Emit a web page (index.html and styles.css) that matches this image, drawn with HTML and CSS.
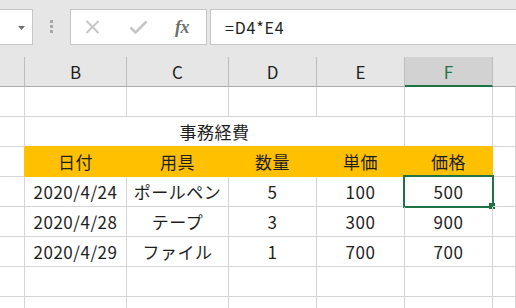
FILE: index.html
```html
<!DOCTYPE html>
<html lang="ja">
<head>
<meta charset="utf-8">
<link rel="stylesheet" href="styles.css">
</head>
<body>
<div class="toolbar">
  <div class="namebox">
    <svg class="caret" width="7" height="4" viewBox="0 0 7 4"><path d="M0 0H7L3.5 4Z" fill="#707070"/></svg>
  </div>
  <div class="grip"><i></i><i></i><i></i></div>
  <div class="fbuttons">
    <svg class="ico-x" width="15" height="14" viewBox="0 0 15 14"><path d="M1.5 1L13.5 13M13.5 1L1.5 13" stroke="#c6c6c6" stroke-width="2" fill="none"/></svg>
    <svg class="ico-check" width="19" height="14" viewBox="0 0 19 14"><path d="M1.5 7.5L6.5 12.5L17.5 1.5" stroke="#c6c6c6" stroke-width="2.6" fill="none"/></svg>
    <span class="fx">fx</span>
  </div>
  <div class="finput">=D4*E4</div>
</div>
<div class="grid">
  <div class="c h"></div>
  <div class="c h">B</div>
  <div class="c h">C</div>
  <div class="c h">D</div>
  <div class="c h">E</div>
  <div class="c h sel">F</div>
  <div class="c h last"></div>

  <div class="c"></div><div class="c"></div><div class="c"></div><div class="c"></div><div class="c"></div><div class="c"></div><div class="c"></div>

  <div class="c"></div>
  <div class="c title above-fill">事務経費</div>
  <div class="c above-fill"></div>
  <div class="c"></div>

  <div class="c before-fill"></div>
  <div class="c fill">日付</div>
  <div class="c fill">用具</div>
  <div class="c fill">数量</div>
  <div class="c fill">単価</div>
  <div class="c fill">価格</div>
  <div class="c"></div>

  <div class="c"></div>
  <div class="c">2020/4/24</div>
  <div class="c">ポールペン</div>
  <div class="c">5</div>
  <div class="c">100</div>
  <div class="c active">500<span class="selbox"><span class="handle"></span></span></div>
  <div class="c"></div>

  <div class="c"></div>
  <div class="c">2020/4/28</div>
  <div class="c">テープ</div>
  <div class="c">3</div>
  <div class="c">300</div>
  <div class="c">900</div>
  <div class="c"></div>

  <div class="c"></div>
  <div class="c">2020/4/29</div>
  <div class="c">ファイル</div>
  <div class="c">1</div>
  <div class="c">700</div>
  <div class="c">700</div>
  <div class="c"></div>

  <div class="c"></div><div class="c"></div><div class="c"></div><div class="c"></div><div class="c"></div><div class="c"></div><div class="c"></div>
  <div class="c"></div><div class="c"></div><div class="c"></div><div class="c"></div><div class="c"></div><div class="c"></div><div class="c"></div>
</div>
</body>
</html>
```
FILE: styles.css
```css
* { box-sizing: border-box; }

body {
  margin: 0;
  width: 516px;
  height: 308px;
  overflow: hidden;
  background: #e6e6e6;
  font-family: "Noto Sans CJK JP", "Noto Sans", sans-serif;
  color: #1e1e1e;
}

.toolbar {
  height: 57px;
  display: flex;
  align-items: flex-start;
  padding-top: 9px;
}

.namebox {
  width: 33px;
  height: 36px;
  background: #fff;
  border: 1px solid #c6c6c6;
  border-left: none;
  display: flex;
  align-items: center;
  justify-content: flex-end;
  padding-right: 7px;
}

.caret { display: block; margin-top: 1px; }

.grip {
  margin-left: 17px;
  margin-top: 11px;
  width: 3px;
  display: flex;
  flex-direction: column;
  gap: 2px;
}

.grip i {
  display: block;
  width: 3px;
  height: 3px;
  background: #a8a8a8;
}

.fbuttons {
  margin-left: 17px;
  width: 137px;
  height: 36px;
  background: #fff;
  border: 1px solid #c6c6c6;
  display: flex;
  align-items: center;
  padding-left: 14px;
}

.ico-x { display: block; }
.ico-check { display: block; margin-left: 29px; }

.fx {
  margin-left: 27px;
  font-family: "Liberation Serif", "DejaVu Serif", serif;
  font-style: italic;
  font-weight: bold;
  font-size: 18px;
  color: #6f6f6f;
  letter-spacing: -0.5px;
  line-height: 1;
}

.finput {
  margin-left: 3px;
  flex: 1;
  height: 36px;
  background: #fff;
  border: 1px solid #c6c6c6;
  border-right: none;
  padding-left: 14px;
  font-size: 16px;
  line-height: 34px;
  letter-spacing: 0.8px;
  color: #222;
}

.grid {
  display: grid;
  grid-template-columns: 25px 102px 102px 88px 88px 88px 1fr;
  grid-auto-rows: 30px;
  height: 251px;
  overflow: hidden;
  background: #fff;
}

.c {
  position: relative;
  display: flex;
  align-items: center;
  justify-content: center;
  border-right: 1px solid #d4d4d4;
  border-bottom: 1px solid #d4d4d4;
  font-size: 17px;
  letter-spacing: 0.5px;
  white-space: nowrap;
}

.h {
  background: #e6e6e6;
  border-right-color: #bdbdbd;
  border-bottom-color: #ababab;
  color: #1e1e1e;
  letter-spacing: 0;
}

.h.sel {
  background: #d2d2d2;
  border-bottom: 2px solid #217346;
  color: #217346;
}

.h.last { border-right: none; }

.title { grid-column: span 4; }

.above-fill { border-bottom-color: #ffc000; }
.before-fill { border-right-color: #ffc000; }

.fill {
  background: #ffc000;
  border-color: #ffc000;
}

.selbox {
  position: absolute;
  left: -2px;
  top: -2px;
  right: -2px;
  bottom: -2px;
  border: 2px solid #217346;
}

.handle {
  position: absolute;
  right: -3px;
  bottom: -3px;
  width: 6px;
  height: 6px;
  background: #217346;
}
```
